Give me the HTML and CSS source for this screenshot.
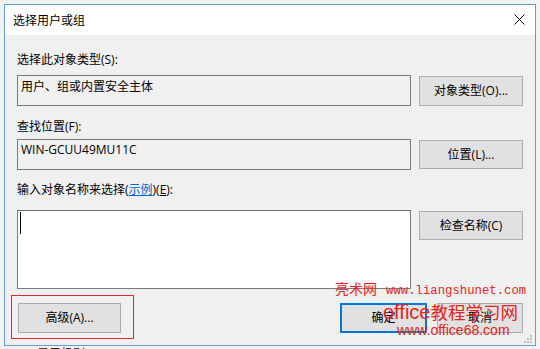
FILE: index.html
```html
<!DOCTYPE html>
<html lang="zh-CN">
<head>
<meta charset="utf-8">
<title>选择用户或组</title>
<link rel="stylesheet" href="styles.css">
</head>
<body>
<div class="desk">
  <div class="window">
    <div class="titlebar">
      <span class="title">选择用户或组</span>
      <span class="close">
        <svg width="11" height="11" viewBox="0 0 11 11"><path d="M0.5 0.5 L10.5 10.5 M10.5 0.5 L0.5 10.5" stroke="#000" stroke-width="1" fill="none"/></svg>
      </span>
    </div>
    <div class="content">
      <div class="label l1">选择此对象类型(S):</div>
      <div class="row r1">
        <div class="field">用户、组或内置安全主体</div>
        <button class="btn">对象类型(O)...</button>
      </div>
      <div class="label l2">查找位置(F):</div>
      <div class="row r2">
        <div class="field">WIN-GCUU49MU11C</div>
        <button class="btn">位置(L)...</button>
      </div>
      <div class="label l3">输入对象名称来选择(<span class="link">示例</span>)(<u>E</u>):</div>
      <div class="row r3">
        <div class="textarea"><span class="caret"></span></div>
        <button class="btn">检查名称(C)</button>
      </div>
      <div class="bottom">
        <div class="adv-wrap">
          <button class="btn adv">高级(A)...</button>
          <span class="redbox"></span>
        </div>
        <div class="actions">
          <button class="btn ok">确定</button>
          <button class="btn cancel">取消</button>
        </div>
      </div>
    </div>
    <svg class="grip" width="8" height="8" viewBox="0 0 8 8">
      <rect x="6" y="0" width="2" height="2" fill="#bdbdbd"/>
      <rect x="3" y="3" width="2" height="2" fill="#bdbdbd"/>
      <rect x="6" y="3" width="2" height="2" fill="#bdbdbd"/>
      <rect x="0" y="6" width="2" height="2" fill="#bdbdbd"/>
      <rect x="3" y="6" width="2" height="2" fill="#bdbdbd"/>
      <rect x="6" y="6" width="2" height="2" fill="#bdbdbd"/>
    </svg>
  </div>
  <div class="behind">显示级别</div>
  <div class="wm wm1"><span class="wm-cn">亮术网</span><span class="wm-mono">www.liangshunet.com</span></div>
  <div class="wm wm2"><span class="wm2-lat">office</span><span class="wm2-cn">教程学习网</span></div>
  <div class="wm wm3">www.office68.com</div>
</div>
</body>
</html>
```

FILE: styles.css
```css
html, body {
  margin: 0;
  padding: 0;
}
body {
  background: #f2f2f2;
  font-family: "Segoe UI", "Open Sans", "Noto Sans CJK SC", sans-serif;
  font-size: 12px;
  color: #000;
  overflow: hidden;
  width: 540px;
  height: 349px;
}
.desk {
  position: relative;
  width: 540px;
  height: 349px;
  padding: 4px 0 0 4px;
  box-sizing: border-box;
}
.window {
  position: relative;
  width: 532px;
  height: 342px;
  box-sizing: border-box;
  border: 1px solid #5f9ed8;
  background: #f0f0f0;
  display: flex;
  flex-direction: column;
}
.titlebar {
  height: 30px;
  background: #fff;
  display: flex;
  align-items: center;
  justify-content: space-between;
  padding-left: 8px;
  padding-right: 10px;
  flex: none;
}
.title {
  font-family: "Noto Sans CJK SC", sans-serif;
  font-size: 12px;
  line-height: 16px;
}
.close {
  display: flex;
  width: 11px;
  height: 11px;
  margin-top: -2px;
}
.content {
  padding: 17px 12px 0 12px;
  display: flex;
  flex-direction: column;
}
.label {
  line-height: 16px;
  height: 16px;
  white-space: nowrap;
}
.l2 { margin-top: 13px; }
.l3 { margin-top: 12px; }
.link {
  color: #0066cc;
  text-decoration: underline;
}
.row {
  display: grid;
  grid-template-columns: 394px 104px;
  column-gap: 8px;
  align-items: start;
}
.r1 { margin-top: 7px; }
.r2 { margin-top: 4px; }
.r3 { margin-top: 12px; }
.field {
  height: 31px;
  box-sizing: border-box;
  border: 1px solid #7a7a7a;
  background: #f0f0f0;
  padding: 3px 3px;
  line-height: 16px;
}
.r2 .field { padding-top: 2px; }
.textarea {
  height: 79px;
  box-sizing: border-box;
  border: 1px solid #7a7a7a;
  border-top-color: #6b6b6b;
  background: #fff;
  padding: 1px 2px;
}
.caret {
  display: block;
  width: 1px;
  height: 22px;
  background: #000;
}
.btn {
  font-family: "Segoe UI", "Open Sans", "Noto Sans CJK SC", sans-serif;
  font-size: 12px;
  color: #000;
  background: #e1e1e1;
  border: 1px solid #adadad;
  height: 30px;
  margin: 1px 0 0 0;
  padding: 0;
  box-sizing: border-box;
  line-height: 16px;
}
.r2 .btn { height: 29px; }
.r3 .btn { height: 29px; }
.bottom {
  margin-top: 14px;
  display: flex;
  justify-content: space-between;
  align-items: flex-start;
}
.adv-wrap {
  position: relative;
  margin-left: 1px;
}
.adv {
  width: 103px;
  margin: 0;
}
.redbox {
  position: absolute;
  left: -7px;
  top: -8px;
  right: -13px;
  bottom: -6px;
  border: 1px solid #e2262b;
  pointer-events: none;
}
.actions {
  display: flex;
  gap: 10px;
}
.ok {
  width: 87px;
  margin: 0;
  border: 2px solid #0078d7;
}
.cancel {
  width: 86px;
  margin: 0;
}
.grip {
  position: absolute;
  right: 3px;
  bottom: 2px;
}
.behind {
  padding-left: 33px;
  font-family: "Noto Sans CJK SC", sans-serif;
  font-size: 12px;
  line-height: 14px;
  color: #222;
}
.wm {
  position: absolute;
  color: #e3241f;
  white-space: nowrap;
  z-index: 5;
}
.wm1 {
  left: 335px;
  top: 280px;
  line-height: 16px;
}
.wm-cn {
  font-family: "Noto Sans CJK SC", sans-serif;
  font-size: 14px;
  margin-right: 9px;
}
.wm-mono {
  font-family: "Liberation Mono", monospace;
  font-size: 12.3px;
}
.wm2 {
  left: 383px;
  top: 300px;
  line-height: 24px;
}
.wm2-lat {
  font-family: "Liberation Sans", sans-serif;
  font-size: 20px;
}
.wm2-cn {
  font-family: "Noto Sans CJK SC", sans-serif;
  font-size: 17.5px;
}
.wm3 {
  left: 397px;
  top: 322px;
  font-family: "Liberation Sans", sans-serif;
  font-size: 14px;
  line-height: 16px;
}
```
